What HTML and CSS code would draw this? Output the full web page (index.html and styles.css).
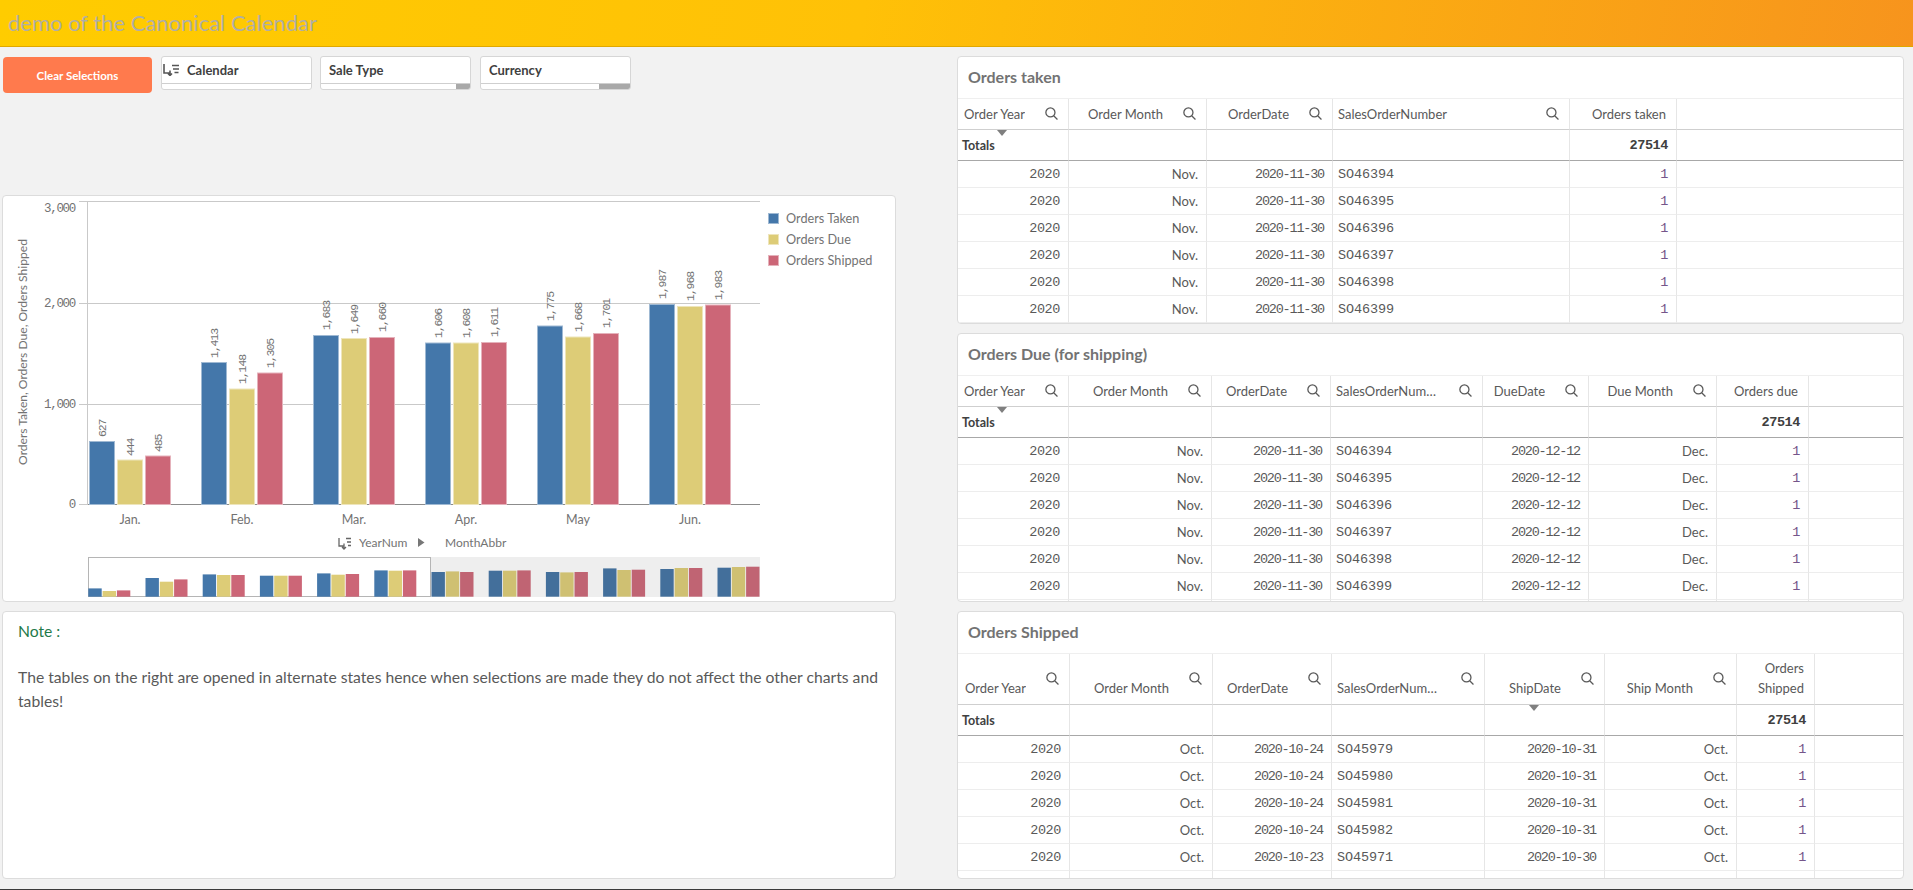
FILE: index.html
```html
<!DOCTYPE html>
<html lang="en">
<head>
<meta charset="UTF-8">
<title>demo of the Canonical Calendar</title>
<link rel="stylesheet" href="styles.css">
</head>
<body>

<header class="topbar">
  <h1 class="app-title">demo of the Canonical Calendar</h1>
</header>

<main class="sheet">

  <!-- left side -->
  <section class="left">
    <div class="toolbar">
      <button class="clear-btn">Clear Selections</button>
      <div class="pane">
        <div class="pane-title">
          <svg class="drill" width="16" height="12" viewBox="0 0 16 12"><path d="M1 0v9h6M7 6.5v5M5 9.5l2 2 2-2M9 1.5h7M10 5h6M11.5 8.5h4" fill="none" stroke="#555" stroke-width="1.6"/></svg>
          <span>Calendar</span>
        </div>
        <div class="pane-foot"></div>
      </div>
      <div class="pane">
        <div class="pane-title"><span>Sale Type</span></div>
        <div class="pane-foot"><i class="thumb thumb-s"></i></div>
      </div>
      <div class="pane">
        <div class="pane-title"><span>Currency</span></div>
        <div class="pane-foot"><i class="thumb thumb-l"></i></div>
      </div>
    </div>

    <div class="card chart-card">
      <svg class="chart" width="892" height="405" viewBox="3 196 892 405">
        <!-- grid -->
        <g class="grid">
          <path d="M79 201.5H760M79 303.5H760M79 404.5H760M79 504.5H88M87.5 201V505"/>
        </g>
        <path class="baseline" d="M88 504.5H760"/>

        <g class="tick-y">
          <text x="75" y="212">3,000</text>
          <text x="75" y="307">2,000</text>
          <text x="75" y="408">1,000</text>
          <text x="75" y="508">0</text>
        </g>
        <text class="axis-title" transform="translate(27 352) rotate(-90)">Orders Taken, Orders Due, Orders Shipped</text>

        <!-- bars -->
        <g class="s-blue">
          <rect x="89.5" y="441.5" width="25" height="63"/>
          <rect x="201.5" y="362.5" width="25" height="142"/>
          <rect x="313.5" y="335.5" width="25" height="169"/>
          <rect x="425.5" y="343" width="25" height="161.5"/>
          <rect x="537.5" y="326" width="25" height="178.5"/>
          <rect x="649.5" y="304.5" width="25" height="200"/>
        </g>
        <g class="s-yellow">
          <rect x="117.5" y="460" width="25" height="44.5"/>
          <rect x="229.5" y="389" width="25" height="115.5"/>
          <rect x="341.5" y="338.5" width="25" height="166"/>
          <rect x="453.5" y="343" width="25" height="161.5"/>
          <rect x="565.5" y="337" width="25" height="167.5"/>
          <rect x="677.5" y="306.5" width="25" height="198"/>
        </g>
        <g class="s-red">
          <rect x="145.5" y="456" width="25" height="48.5"/>
          <rect x="257.5" y="373" width="25" height="131.5"/>
          <rect x="369.5" y="337.5" width="25" height="167"/>
          <rect x="481.5" y="342.5" width="25" height="162"/>
          <rect x="593.5" y="333.5" width="25" height="171"/>
          <rect x="705.5" y="305" width="25" height="199.5"/>
        </g>

        <!-- value labels -->
        <g class="val">
          <text transform="translate(106 437) rotate(-90)">627</text>
          <text transform="translate(134 456) rotate(-90)">444</text>
          <text transform="translate(162 452) rotate(-90)">485</text>
          <text transform="translate(218 358) rotate(-90)">1,413</text>
          <text transform="translate(246 384) rotate(-90)">1,148</text>
          <text transform="translate(274 368) rotate(-90)">1,305</text>
          <text transform="translate(330 330) rotate(-90)">1,683</text>
          <text transform="translate(358 334) rotate(-90)">1,649</text>
          <text transform="translate(386 332) rotate(-90)">1,660</text>
          <text transform="translate(442 338) rotate(-90)">1,606</text>
          <text transform="translate(470 338) rotate(-90)">1,608</text>
          <text transform="translate(498 337) rotate(-90)">1,611</text>
          <text transform="translate(554 321) rotate(-90)">1,775</text>
          <text transform="translate(582 332) rotate(-90)">1,668</text>
          <text transform="translate(610 328) rotate(-90)">1,701</text>
          <text transform="translate(666 299) rotate(-90)">1,987</text>
          <text transform="translate(694 301) rotate(-90)">1,968</text>
          <text transform="translate(722 300) rotate(-90)">1,983</text>
        </g>

        <g class="tick-x">
          <text x="130" y="524">Jan.</text>
          <text x="242" y="524">Feb.</text>
          <text x="354" y="524">Mar.</text>
          <text x="466" y="524">Apr.</text>
          <text x="578" y="524">May</text>
          <text x="690" y="524">Jun.</text>
        </g>

        <!-- drill path under the axis -->
        <path d="M339 538v8h5M344 543.5v5.5M342 547l2 2 2-2M346 538.5h5M347 542h4M348 545.5h3" fill="none" stroke="#666" stroke-width="1.3"/>
        <text class="dim-name" x="359" y="547">YearNum</text>
        <path d="M418 538l6.5 4.5-6.5 4.5z" fill="#777"/>
        <text class="dim-name" x="445" y="547">MonthAbbr</text>

        <!-- mini chart -->
        <rect x="88" y="557" width="672" height="40" fill="#eeeeee"/>
        <rect x="88.5" y="557.5" width="342" height="39" fill="#fff" stroke="#b5b5b5"/>
        <g class="m-blue">
          <rect x="88.3" y="588.4" width="13.4" height="8.3"/>
          <rect x="145.5" y="578" width="13.4" height="18.7"/>
          <rect x="202.7" y="574.4" width="13.4" height="22.3"/>
          <rect x="259.9" y="575.7" width="13.4" height="21"/>
          <rect x="317.1" y="573.4" width="13.4" height="23.3"/>
          <rect x="374.3" y="570.4" width="13.4" height="26.3"/>
        </g>
        <g class="m-yellow">
          <rect x="102.6" y="591" width="13.4" height="5.7"/>
          <rect x="159.8" y="581.7" width="13.4" height="15"/>
          <rect x="217" y="575" width="13.4" height="21.7"/>
          <rect x="274.2" y="575.7" width="13.4" height="21"/>
          <rect x="331.4" y="574.7" width="13.4" height="22"/>
          <rect x="388.6" y="570.7" width="13.4" height="26"/>
        </g>
        <g class="m-red">
          <rect x="116.9" y="590.4" width="13.4" height="6.3"/>
          <rect x="174.1" y="579.4" width="13.4" height="17.3"/>
          <rect x="231.3" y="575" width="13.4" height="21.7"/>
          <rect x="288.5" y="575.7" width="13.4" height="21"/>
          <rect x="345.7" y="574" width="13.4" height="22.7"/>
          <rect x="402.9" y="570.4" width="13.4" height="26.3"/>
        </g>
        <g class="m-blue-off">
          <rect x="431.5" y="572" width="13.4" height="24.7"/>
          <rect x="488.7" y="570.7" width="13.4" height="26"/>
          <rect x="545.9" y="572" width="13.4" height="24.7"/>
          <rect x="603.1" y="568.4" width="13.4" height="28.3"/>
          <rect x="660.3" y="569" width="13.4" height="27.7"/>
          <rect x="717.5" y="567.7" width="13.4" height="29"/>
        </g>
        <g class="m-yellow-off">
          <rect x="445.8" y="571.4" width="13.4" height="25.3"/>
          <rect x="503" y="570.7" width="13.4" height="26"/>
          <rect x="560.2" y="572.4" width="13.4" height="24.3"/>
          <rect x="617.4" y="570" width="13.4" height="26.7"/>
          <rect x="674.6" y="568" width="13.4" height="28.7"/>
          <rect x="731.8" y="567" width="13.4" height="29.7"/>
        </g>
        <g class="m-red-off">
          <rect x="460.1" y="572" width="13.4" height="24.7"/>
          <rect x="517.3" y="570.4" width="13.4" height="26.3"/>
          <rect x="574.5" y="572" width="13.4" height="24.7"/>
          <rect x="631.7" y="569.7" width="13.4" height="27"/>
          <rect x="688.9" y="568" width="13.4" height="28.7"/>
          <rect x="746.1" y="566.7" width="13.4" height="30"/>
        </g>

        <!-- legend -->
        <rect class="lg-blue" x="768.5" y="213.5" width="10" height="10"/>
        <rect class="lg-yellow" x="768.5" y="234.5" width="10" height="10"/>
        <rect class="lg-red" x="768.5" y="255.5" width="10" height="10"/>
        <g class="legend">
          <text x="786" y="223">Orders Taken</text>
          <text x="786" y="244">Orders Due</text>
          <text x="786" y="265">Orders Shipped</text>
        </g>
      </svg>
    </div>

    <div class="card note-card">
      <p class="note-head">Note :</p>
      <p class="note-text">The tables on the right are opened in alternate states hence when selections are made they do not affect the other charts and tables!</p>
    </div>
  </section>

  <!-- right side -->
  <section class="right">

    <div class="card table-card">
      <h2 class="table-title">Orders taken</h2>
      <table class="tbl taken">
        <colgroup><col><col><col><col><col><col></colgroup>
        <thead>
          <tr>
            <th class="sort"><div class="hd"><span class="hd-txt">Order Year</span><svg class="mag" viewBox="0 0 12 12"><circle cx="5" cy="5" r="4.2"/><path d="M8 8l3.5 3.5"/></svg></div></th>
            <th><div class="hd"><span class="hd-txt">Order Month</span><svg class="mag" viewBox="0 0 12 12"><circle cx="5" cy="5" r="4.2"/><path d="M8 8l3.5 3.5"/></svg></div></th>
            <th><div class="hd"><span class="hd-txt">OrderDate</span><svg class="mag" viewBox="0 0 12 12"><circle cx="5" cy="5" r="4.2"/><path d="M8 8l3.5 3.5"/></svg></div></th>
            <th class="start"><div class="hd"><span class="hd-txt">SalesOrderNumber</span><svg class="mag" viewBox="0 0 12 12"><circle cx="5" cy="5" r="4.2"/><path d="M8 8l3.5 3.5"/></svg></div></th>
            <th><div class="hd"><span class="hd-txt">Orders taken</span></div></th>
            <th></th>
          </tr>
        </thead>
        <tbody>
          <tr class="totals"><td class="start lbl">Totals</td><td></td><td></td><td></td><td class="num">27514</td><td></td></tr>
          <tr><td class="num">2020</td><td class="txt">Nov.</td><td class="num date">2020-11-30</td><td class="start so">SO46394</td><td class="num one">1</td><td></td></tr>
          <tr><td class="num">2020</td><td class="txt">Nov.</td><td class="num date">2020-11-30</td><td class="start so">SO46395</td><td class="num one">1</td><td></td></tr>
          <tr><td class="num">2020</td><td class="txt">Nov.</td><td class="num date">2020-11-30</td><td class="start so">SO46396</td><td class="num one">1</td><td></td></tr>
          <tr><td class="num">2020</td><td class="txt">Nov.</td><td class="num date">2020-11-30</td><td class="start so">SO46397</td><td class="num one">1</td><td></td></tr>
          <tr><td class="num">2020</td><td class="txt">Nov.</td><td class="num date">2020-11-30</td><td class="start so">SO46398</td><td class="num one">1</td><td></td></tr>
          <tr><td class="num">2020</td><td class="txt">Nov.</td><td class="num date">2020-11-30</td><td class="start so">SO46399</td><td class="num one">1</td><td></td></tr>
          <tr><td></td><td></td><td></td><td></td><td></td><td></td></tr>
        </tbody>
      </table>
    </div>

    <div class="card table-card">
      <h2 class="table-title">Orders Due (for shipping)</h2>
      <table class="tbl due">
        <colgroup><col><col><col><col><col><col><col><col></colgroup>
        <thead>
          <tr>
            <th class="sort"><div class="hd"><span class="hd-txt">Order Year</span><svg class="mag" viewBox="0 0 12 12"><circle cx="5" cy="5" r="4.2"/><path d="M8 8l3.5 3.5"/></svg></div></th>
            <th><div class="hd"><span class="hd-txt">Order Month</span><svg class="mag" viewBox="0 0 12 12"><circle cx="5" cy="5" r="4.2"/><path d="M8 8l3.5 3.5"/></svg></div></th>
            <th><div class="hd"><span class="hd-txt">OrderDate</span><svg class="mag" viewBox="0 0 12 12"><circle cx="5" cy="5" r="4.2"/><path d="M8 8l3.5 3.5"/></svg></div></th>
            <th class="start"><div class="hd"><span class="hd-txt">SalesOrderNumber</span><svg class="mag" viewBox="0 0 12 12"><circle cx="5" cy="5" r="4.2"/><path d="M8 8l3.5 3.5"/></svg></div></th>
            <th><div class="hd"><span class="hd-txt">DueDate</span><svg class="mag" viewBox="0 0 12 12"><circle cx="5" cy="5" r="4.2"/><path d="M8 8l3.5 3.5"/></svg></div></th>
            <th><div class="hd"><span class="hd-txt">Due Month</span><svg class="mag" viewBox="0 0 12 12"><circle cx="5" cy="5" r="4.2"/><path d="M8 8l3.5 3.5"/></svg></div></th>
            <th><div class="hd"><span class="hd-txt">Orders due</span></div></th>
            <th></th>
          </tr>
        </thead>
        <tbody>
          <tr class="totals"><td class="start lbl">Totals</td><td></td><td></td><td></td><td></td><td></td><td class="num">27514</td><td></td></tr>
          <tr><td class="num">2020</td><td class="txt">Nov.</td><td class="num date">2020-11-30</td><td class="start so">SO46394</td><td class="num date">2020-12-12</td><td class="txt">Dec.</td><td class="num one">1</td><td></td></tr>
          <tr><td class="num">2020</td><td class="txt">Nov.</td><td class="num date">2020-11-30</td><td class="start so">SO46395</td><td class="num date">2020-12-12</td><td class="txt">Dec.</td><td class="num one">1</td><td></td></tr>
          <tr><td class="num">2020</td><td class="txt">Nov.</td><td class="num date">2020-11-30</td><td class="start so">SO46396</td><td class="num date">2020-12-12</td><td class="txt">Dec.</td><td class="num one">1</td><td></td></tr>
          <tr><td class="num">2020</td><td class="txt">Nov.</td><td class="num date">2020-11-30</td><td class="start so">SO46397</td><td class="num date">2020-12-12</td><td class="txt">Dec.</td><td class="num one">1</td><td></td></tr>
          <tr><td class="num">2020</td><td class="txt">Nov.</td><td class="num date">2020-11-30</td><td class="start so">SO46398</td><td class="num date">2020-12-12</td><td class="txt">Dec.</td><td class="num one">1</td><td></td></tr>
          <tr><td class="num">2020</td><td class="txt">Nov.</td><td class="num date">2020-11-30</td><td class="start so">SO46399</td><td class="num date">2020-12-12</td><td class="txt">Dec.</td><td class="num one">1</td><td></td></tr>
          <tr><td></td><td></td><td></td><td></td><td></td><td></td><td></td><td></td></tr>
        </tbody>
      </table>
    </div>

    <div class="card table-card">
      <h2 class="table-title">Orders Shipped</h2>
      <table class="tbl shipped">
        <colgroup><col><col><col><col><col><col><col><col></colgroup>
        <thead>
          <tr>
            <th><div class="hd"><span class="hd-txt">Order Year</span><svg class="mag" viewBox="0 0 12 12"><circle cx="5" cy="5" r="4.2"/><path d="M8 8l3.5 3.5"/></svg></div></th>
            <th><div class="hd"><span class="hd-txt">Order Month</span><svg class="mag" viewBox="0 0 12 12"><circle cx="5" cy="5" r="4.2"/><path d="M8 8l3.5 3.5"/></svg></div></th>
            <th><div class="hd"><span class="hd-txt">OrderDate</span><svg class="mag" viewBox="0 0 12 12"><circle cx="5" cy="5" r="4.2"/><path d="M8 8l3.5 3.5"/></svg></div></th>
            <th class="start"><div class="hd"><span class="hd-txt">SalesOrderNumber</span><svg class="mag" viewBox="0 0 12 12"><circle cx="5" cy="5" r="4.2"/><path d="M8 8l3.5 3.5"/></svg></div></th>
            <th class="sort sort-ship"><div class="hd"><span class="hd-txt">ShipDate</span><svg class="mag" viewBox="0 0 12 12"><circle cx="5" cy="5" r="4.2"/><path d="M8 8l3.5 3.5"/></svg></div></th>
            <th><div class="hd"><span class="hd-txt">Ship Month</span><svg class="mag" viewBox="0 0 12 12"><circle cx="5" cy="5" r="4.2"/><path d="M8 8l3.5 3.5"/></svg></div></th>
            <th><div class="hd"><span class="hd-txt wrap">Orders Shipped</span></div></th>
            <th></th>
          </tr>
        </thead>
        <tbody>
          <tr class="totals"><td class="start lbl">Totals</td><td></td><td></td><td></td><td></td><td></td><td class="num">27514</td><td></td></tr>
          <tr><td class="num">2020</td><td class="txt">Oct.</td><td class="num date">2020-10-24</td><td class="start so">SO45979</td><td class="num date">2020-10-31</td><td class="txt">Oct.</td><td class="num one">1</td><td></td></tr>
          <tr><td class="num">2020</td><td class="txt">Oct.</td><td class="num date">2020-10-24</td><td class="start so">SO45980</td><td class="num date">2020-10-31</td><td class="txt">Oct.</td><td class="num one">1</td><td></td></tr>
          <tr><td class="num">2020</td><td class="txt">Oct.</td><td class="num date">2020-10-24</td><td class="start so">SO45981</td><td class="num date">2020-10-31</td><td class="txt">Oct.</td><td class="num one">1</td><td></td></tr>
          <tr><td class="num">2020</td><td class="txt">Oct.</td><td class="num date">2020-10-24</td><td class="start so">SO45982</td><td class="num date">2020-10-31</td><td class="txt">Oct.</td><td class="num one">1</td><td></td></tr>
          <tr><td class="num">2020</td><td class="txt">Oct.</td><td class="num date">2020-10-23</td><td class="start so">SO45971</td><td class="num date">2020-10-30</td><td class="txt">Oct.</td><td class="num one">1</td><td></td></tr>
          <tr><td></td><td></td><td></td><td></td><td></td><td></td><td></td><td></td></tr>
        </tbody>
      </table>
    </div>

  </section>
</main>

</body>
</html>
```

FILE: styles.css
```css
* {
  box-sizing: border-box;
}

html, body {
  height: 890px;
}

body {
  margin: 0;
  overflow: hidden;
  background: #f2f2f2;
  color: #595959;
  font-family: Lato, "Open Sans", sans-serif;
  border-bottom: 1px solid #3c3c3c;
}

/* top bar */
.topbar {
  height: 47px;
  padding-left: 8px;
  display: flex;
  align-items: center;
  background: linear-gradient(100deg, #ffcc00 0%, #ffc107 45%, #f7941d 100%);
  border-bottom: 1px solid #e0a800;
}

.app-title {
  margin: 0 0 2px;
  font-size: 22px;
  font-weight: 400;
  color: #b0aea6;
}

/* two columns under the bar */
.sheet {
  display: grid;
  grid-template-columns: 894px 947px;
  column-gap: 61px;
  padding: 9px 9px 0 2px;
}

.left {
  display: grid;
  grid-template-rows: 130px 407px 268px;
  row-gap: 9px;
}

.right {
  display: grid;
  grid-template-rows: 268px 269px 268px;
  row-gap: 9px;
}

.card {
  background: #fff;
  border: 1px solid #dcdcdc;
  border-radius: 4px;
  overflow: hidden;
}

/* filter row */
.toolbar {
  display: flex;
  align-items: flex-start;
  gap: 9px;
}

.clear-btn {
  width: 149px;
  height: 36px;
  margin: 1px 0 0 1px;
  padding: 0;
  border: none;
  border-radius: 4px;
  background: #ff7a4d;
  color: #fff;
  font: bold 11.5px Lato, sans-serif;
}

.pane {
  width: 151px;
  height: 34px;
  background: #fff;
  border: 1px solid #d6d6d6;
  border-radius: 3px;
  overflow: hidden;
  display: flex;
  flex-direction: column;
}

.pane:nth-child(3) {
  margin-left: -1px;
}

.pane-title {
  flex: 1;
  padding-left: 8px;
  display: flex;
  align-items: center;
  font-size: 13px;
  font-weight: bold;
  color: #404040;
}

.drill {
  margin: 0 8px 0 -7px;
}

.pane-foot {
  height: 6px;
  border-top: 1px solid #cfcfcf;
  display: flex;
  justify-content: flex-end;
}

.thumb {
  height: 100%;
  background: #a9a9a9;
}

.thumb-s {
  width: 14px;
}

.thumb-l {
  width: 31px;
}

/* chart */
.chart {
  display: block;
}

.chart text {
  font-family: Lato, sans-serif;
  fill: #737373;
}

.grid path {
  fill: none;
  stroke: #c9c9c9;
}

.baseline {
  fill: none;
  stroke: #8c8c8c;
}

.chart .tick-y text {
  font-family: "Liberation Mono", monospace;
  font-size: 12.5px;
  letter-spacing: -1.3px;
  text-anchor: end;
}

.axis-title {
  font-size: 12.1px;
  text-anchor: middle;
}

.chart .val text {
  font-family: "Liberation Mono", monospace;
  font-size: 11.5px;
  letter-spacing: -1.1px;
}

.tick-x text {
  font-size: 12.5px;
  text-anchor: middle;
}

.dim-name {
  font-size: 12px;
}

.legend text {
  font-size: 12.7px;
}

.s-blue rect, .lg-blue {
  fill: #4477aa;
  stroke: #9fb9d3;
}

.s-yellow rect, .lg-yellow {
  fill: #ddcc77;
  stroke: #eee5bb;
}

.s-red rect, .lg-red {
  fill: #cc6677;
  stroke: #e5b2bb;
}

.m-blue rect {
  fill: #4477aa;
}

.m-yellow rect {
  fill: #ddcc77;
}

.m-red rect {
  fill: #cc6677;
}

.m-blue-off rect {
  fill: #436f9b;
}

.m-yellow-off rect {
  fill: #cfc072;
}

.m-red-off rect {
  fill: #c06473;
}

/* note */
.note-card {
  padding: 8px 15px;
}

.note-head {
  margin: 0 0 22px;
  font-size: 15.7px;
  line-height: 23px;
  color: #1f7a4a;
}

.note-text {
  margin: 0;
  font-size: 15.7px;
  line-height: 24px;
}

/* tables */
.table-title {
  height: 42px;
  margin: 0;
  padding: 0 0 2px 10px;
  display: flex;
  align-items: center;
  font-size: 16px;
  font-weight: bold;
  color: #737373;
  border-bottom: 1px solid #efefef;
}

.tbl {
  width: 100%;
  table-layout: fixed;
  border-collapse: separate;
  border-spacing: 0;
  font-size: 13px;
}

.tbl th, .tbl td {
  padding: 0 8px 0 0;
  border-right: 1px solid #e6e6e6;
  border-bottom: 1px solid #ededed;
  text-align: right;
  white-space: nowrap;
}

.tbl th:last-child, .tbl td:last-child {
  border-right: none;
}

.tbl th {
  height: 31px;
  padding: 0 10px 1px 0;
  font-weight: 400;
  position: relative;
  border-bottom: 1px solid #cfcfcf;
}

.tbl td {
  height: 27px;
}

.tbl .start {
  padding-left: 5px;
  text-align: left;
}

.hd {
  display: flex;
  align-items: center;
  justify-content: flex-end;
  gap: 20px;
}

.hd-txt {
  overflow: hidden;
  text-overflow: ellipsis;
}

.start .hd-txt {
  flex: 1;
  min-width: 0;
}

.mag {
  flex: none;
  width: 13px;
  height: 13px;
  fill: none;
  stroke: #595959;
  stroke-width: 1.2;
}

/* little arrow that marks the sorted column */
.sort::after {
  content: "";
  position: absolute;
  left: 39px;
  bottom: -7px;
  z-index: 1;
  border-left: 5px solid transparent;
  border-right: 5px solid transparent;
  border-top: 6px solid #7f7f7f;
}

.sort-ship::after {
  left: 44px;
}

.totals td {
  height: 31px;
  border-bottom: 1px solid #a8a8a8;
  font-family: "Liberation Mono", monospace;
  font-weight: bold;
  color: #404040;
}

.totals .lbl {
  padding-left: 4px;
  font-family: Lato, sans-serif;
  font-size: 12.5px;
}

.tbl .num, .tbl .so {
  font-family: "Liberation Mono", monospace;
  font-size: 13.5px;
}

.tbl .num {
  letter-spacing: -0.4px;
}

.tbl .so {
  letter-spacing: -0.1px;
}

.tbl .date {
  letter-spacing: -1.2px;
}

.tbl .one {
  color: #75558a;
}

/* column widths per table */
.taken col:nth-child(1) { width: 111px; }
.taken col:nth-child(2) { width: 138px; }
.taken col:nth-child(3) { width: 126px; }
.taken col:nth-child(4) { width: 237px; }
.taken col:nth-child(5) { width: 107px; }

.due col:nth-child(1) { width: 111px; }
.due col:nth-child(2) { width: 143px; }
.due col:nth-child(3) { width: 119px; }
.due col:nth-child(4) { width: 152px; }
.due col:nth-child(5) { width: 106px; }
.due col:nth-child(6) { width: 128px; }
.due col:nth-child(7) { width: 92px; }

.shipped col:nth-child(1) { width: 112px; }
.shipped col:nth-child(2) { width: 143px; }
.shipped col:nth-child(3) { width: 119px; }
.shipped col:nth-child(4) { width: 153px; }
.shipped col:nth-child(5) { width: 120px; }
.shipped col:nth-child(6) { width: 132px; }
.shipped col:nth-child(7) { width: 78px; }

/* third table has a taller, two line header */
.shipped th {
  height: 51px;
  vertical-align: bottom;
  padding-bottom: 6px;
}

.shipped .hd {
  align-items: flex-end;
  line-height: 20px;
}

.shipped .mag {
  margin-bottom: 13px;
}

.wrap {
  white-space: normal;
}
```
